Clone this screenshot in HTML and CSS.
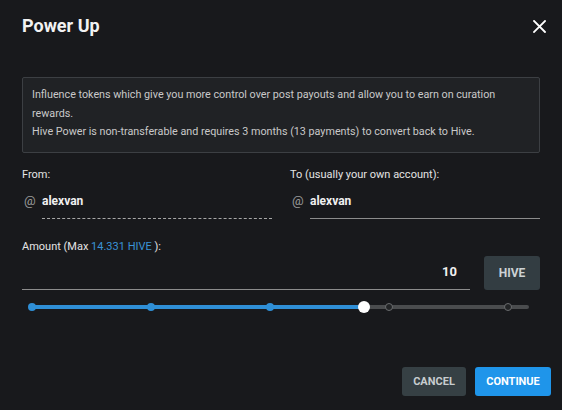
FILE: index.html
```html
<!DOCTYPE html>
<html lang="en">
<head>
    <meta charset="UTF-8">
    <title>Power Up</title>
    <link rel="stylesheet" href="styles.css">
</head>
<body>
    <div class="modal">
        <div class="modal-header">
            <h2>Power Up</h2>
            <button class="close-button" aria-label="Close">
                <svg width="13" height="13" viewBox="0 0 13 13">
                    <path d="M1 1 L12 12 M12 1 L1 12" stroke="#fff" stroke-width="1.8" stroke-linecap="square"/>
                </svg>
            </button>
        </div>

        <div class="modal-body">
            <div class="info-box">
                Influence tokens which give you more control over post payouts and allow you to earn on curation rewards.<br>
                Hive Power is non-transferable and requires 3 months (13 payments) to convert back to Hive.
            </div>

            <div class="accounts">
                <div class="field">
                    <label>From:</label>
                    <div class="account-input">
                        <span class="at">@</span>
                        <span class="value dashed">alexvan</span>
                    </div>
                </div>
                <div class="field">
                    <label>To (usually your own account):</label>
                    <div class="account-input">
                        <span class="at">@</span>
                        <span class="value solid">alexvan</span>
                    </div>
                </div>
            </div>

            <label class="amount-label">Amount (Max <span class="max">14.331 HIVE</span> ):</label>
            <div class="amount-row">
                <div class="amount-input">10</div>
                <button class="asset-button">HIVE</button>
            </div>

            <div class="slider">
                <div class="rail"></div>
                <div class="track" style="width: 69.8%"></div>
                <span class="mark active" style="left: 0%"></span>
                <span class="mark active" style="left: 25%"></span>
                <span class="mark active" style="left: 50%"></span>
                <span class="mark" style="left: 75%"></span>
                <span class="mark" style="left: 100%"></span>
                <span class="thumb" style="left: 69.8%"></span>
            </div>
        </div>

        <div class="modal-footer">
            <button class="btn btn-cancel">CANCEL</button>
            <button class="btn btn-continue">CONTINUE</button>
        </div>
    </div>
</body>
</html>
```

FILE: styles.css
```css
body {
    margin: 0;
    background-color: #18191c;
    font-family: Roboto, "Liberation Sans", Arial, sans-serif;
    color: #e6e6e6;
}
.modal {
    width: 562px;
    height: 410px;
    display: flex;
    flex-direction: column;
}
.modal-header {
    display: flex;
    justify-content: space-between;
    align-items: center;
    padding: 14px 16px 0 22px;
}
.modal-header h2 {
    margin: 0;
    font-size: 18px;
    line-height: 24px;
    font-weight: bold;
    color: #f2f2f2;
}
.close-button {
    background: none;
    border: none;
    padding: 0;
    width: 13px;
    height: 13px;
    display: flex;
    cursor: pointer;
}
.modal-body {
    padding: 39px 22px 0 22px;
}
.info-box {
    background-color: #202225;
    border: 1px solid #3c3f43;
    border-radius: 2px;
    padding: 8px 10px 10px 9px;
    font-size: 10.75px;
    line-height: 18.5px;
    color: #c9c9c9;
}
.accounts {
    display: flex;
    gap: 18px;
    margin-top: 15px;
}
.field {
    flex: 1;
}
label {
    display: block;
    font-size: 11px;
    line-height: 14px;
    color: #e4e4e4;
}
.account-input {
    display: flex;
    align-items: flex-start;
    margin-top: 6px;
}
.at {
    width: 18px;
    margin-left: 2px;
    padding-top: 3px;
    font-size: 13px;
    line-height: 20px;
    color: #9a9a9a;
}
.value {
    flex: 1;
    padding: 3px 0 7px 0;
    font-size: 12px;
    line-height: 20px;
    font-weight: bold;
    color: #f0f0f0;
}
.value.dashed {
    border-bottom: 1px dashed #a8a8a8;
}
.value.solid {
    border-bottom: 1px solid #8c8c8c;
}
.amount-label {
    margin-top: 21px;
}
.max {
    color: #3a93d6;
}
.amount-row {
    display: flex;
    gap: 14px;
    margin-top: 2px;
}
.amount-input {
    flex: 1;
    text-align: right;
    padding: 6px 13px 7px 0;
    font-size: 13px;
    line-height: 20px;
    font-weight: bold;
    color: #f0f0f0;
    border-bottom: 1px solid #8c8c8c;
}
.asset-button {
    width: 56px;
    height: 34px;
    border: none;
    border-radius: 3px;
    background-color: #333d42;
    color: #cdd2d4;
    font-family: inherit;
    font-size: 12px;
    font-weight: bold;
}
.slider {
    position: relative;
    height: 12px;
    margin: 11px 32px 0 10px;
}
.rail {
    position: absolute;
    left: 0;
    right: -21px;
    top: 4px;
    height: 4px;
    background-color: #4a4c4e;
    border-radius: 2px;
}
.track {
    position: absolute;
    left: 0;
    top: 4px;
    height: 4px;
    background-color: #2f8fd6;
    border-radius: 2px;
}
.mark {
    position: absolute;
    top: 2px;
    width: 8px;
    height: 8px;
    margin-left: -4px;
    box-sizing: border-box;
    border-radius: 50%;
    border: 1px solid #6a6c6e;
    background-color: #222426;
}
.mark.active {
    border: none;
    background-color: #2f8fd6;
}
.thumb {
    position: absolute;
    top: 0;
    width: 12px;
    height: 12px;
    margin-left: -6px;
    border-radius: 50%;
    background-color: #ffffff;
}
.modal-footer {
    margin-top: auto;
    display: flex;
    justify-content: flex-end;
    gap: 9px;
    padding: 0 11px 14px 0;
}
.btn {
    height: 29px;
    border: none;
    border-radius: 3px;
    font-family: inherit;
    font-size: 11px;
    font-weight: bold;
    cursor: pointer;
}
.btn-cancel {
    width: 64px;
    background-color: #364044;
    color: #c8cdd0;
}
.btn-continue {
    width: 76px;
    background-color: #1f95ea;
    color: #ffffff;
}
```
